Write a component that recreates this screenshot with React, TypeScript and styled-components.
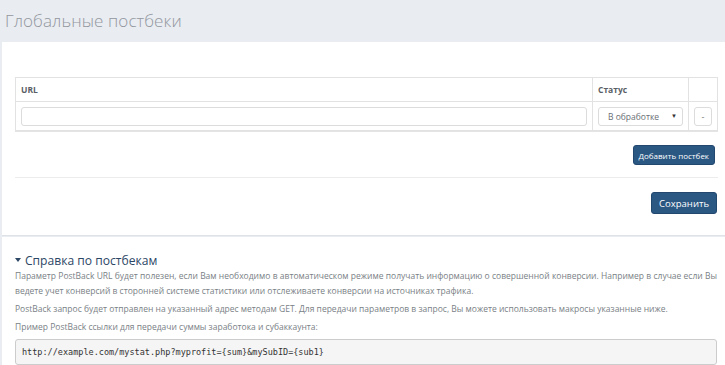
import styled, { createGlobalStyle } from "styled-components";

const GlobalStyle = createGlobalStyle`
  html, body {
    margin: 0;
    padding: 0;
    background: #e9ecf1;
    font-family: "Open Sans", "Liberation Sans", sans-serif;
  }
`;

function App() {
  return (
    <Page>
      <GlobalStyle />
      <Title>Глобальные постбеки</Title>

      <Panel>
        <Table>
          <thead>
            <tr>
              <Th>URL</Th>
              <Th $width={85}>Статус</Th>
              <Th $width={18}></Th>
            </tr>
          </thead>
          <tbody>
            <tr>
              <Td>
                <UrlInput type="text" />
              </Td>
              <Td>
                <Select>
                  <span>В обработке</span>
                  <Caret>▼</Caret>
                </Select>
              </Td>
              <Td>
                <RemoveButton>-</RemoveButton>
              </Td>
            </tr>
          </tbody>
        </Table>

        <ButtonRow>
          <PrimaryButton $small>Добавить постбек</PrimaryButton>
        </ButtonRow>
        <Divider />
        <ButtonRow>
          <PrimaryButton>Сохранить</PrimaryButton>
        </ButtonRow>
      </Panel>

      <HelpPanel>
        <HelpTitle>
          <svg viewBox="0 0 6 4" width="6" height="4">
            <path d="M0 0 L6 0 L3 4 Z" fill="#2c4765" />
          </svg>
          Справка по постбекам
        </HelpTitle>
        <Text>
          Параметр PostBack URL будет полезен, если Вам необходимо в автоматическом режиме получать
          информацию о совершенной конверсии. Например в случае если Вы ведете учет конверсий в
          сторонней системе статистики или отслеживаете конверсии на источниках трафика.
        </Text>
        <Text>
          PostBack запрос будет отправлен на указанный адрес методам GET. Для передачи параметров в
          запрос, Вы можете использовать макросы указанные ниже.
        </Text>
        <Text>Пример PostBack ссылки для передачи суммы заработока и субаккаунта:</Text>
        <Code>http://example.com/mystat.php?myprofit={"{sum}"}&amp;mySubID={"{sub1}"}</Code>
      </HelpPanel>
    </Page>
  );
}

const Page = styled.div`
  display: flex;
  flex-direction: column;
  height: 365px;
  overflow: hidden;
`;

const Title = styled.h1`
  margin: 0;
  padding: 0 5px;
  height: 42px;
  line-height: 41px;
  font-size: 17px;
  font-weight: 300;
  color: #92979e;
  letter-spacing: 0.1px;
`;

const Panel = styled.section`
  margin-left: 2px;
  background: #ffffff;
  border-bottom: 1px solid #dfe2e6;
  padding: 35px 7px 21px 13px;
  display: flex;
  flex-direction: column;
`;

const Table = styled.table`
  width: 100%;
  border-collapse: collapse;
  border: 1px solid #dddddd;
  box-shadow: 0 1px 0 #e4e4e4;
`;

const Th = styled.th<{ $width?: number }>`
  width: ${({ $width }) => ($width ? `${$width}px` : "auto")};
  height: 23px;
  padding: 0 5px;
  text-align: left;
  font-size: 8.5px;
  font-weight: 700;
  color: #5a5f66;
  border: 1px solid #e2e2e2;
`;

const Td = styled.td`
  padding: 4px 5px;
  height: 20px;
  border: 1px solid #e2e2e2;
  border-top: none;
`;

const UrlInput = styled.input`
  display: block;
  width: 100%;
  box-sizing: border-box;
  height: 19px;
  border: 1px solid #dcdcdc;
  border-radius: 3px;
  background: #fff;
`;

const Select = styled.div`
  display: flex;
  align-items: center;
  justify-content: space-between;
  height: 19px;
  box-sizing: border-box;
  border: 1px solid #dcdcdc;
  border-radius: 3px;
  padding: 0 5px 0 9px;
  font-size: 8.5px;
  color: #6a6f75;
`;

const Caret = styled.span`
  font-size: 6px;
  color: #333;
`;

const RemoveButton = styled.div`
  display: flex;
  align-items: center;
  justify-content: center;
  width: 18px;
  height: 19px;
  box-sizing: border-box;
  border: 1px solid #dcdcdc;
  border-radius: 3px;
  font-size: 9px;
  color: #777;
`;

const ButtonRow = styled.div`
  display: flex;
  justify-content: flex-end;
  padding-top: 14px;
`;

const PrimaryButton = styled.button<{ $small?: boolean }>`
  font-family: "Open Sans", "Liberation Sans", sans-serif;
  background: #2b5783;
  color: #ffffff;
  border: 1px solid #224870;
  border-radius: 3px;
  cursor: pointer;
  font-size: ${({ $small }) => ($small ? "8px" : "9.5px")};
  height: ${({ $small }) => ($small ? "20px" : "22px")};
  padding: ${({ $small }) => ($small ? "0 5px" : "0 7px")};
  margin-right: ${({ $small }) => ($small ? "3px" : "1px")};
`;

const Divider = styled.hr`
  margin: 12px 0 0;
  border: none;
  border-top: 1px solid #ececec;
`;

const HelpPanel = styled.section`
  margin: 1px 0 0 2px;
  background: #ffffff;
  padding: 15px 8px 0 13px;
  flex: 1;
`;

const HelpTitle = styled.h2`
  display: flex;
  align-items: center;
  gap: 4px;
  margin: 0;
  height: 16px;
  font-size: 12.1px;
  font-weight: 400;
  color: #2c4765;
`;

const Text = styled.p`
  margin: 0 0 3px;
  font-size: 8.5px;
  line-height: 15px;
  text-align: justify;
  color: #7a7f86;
`;

const Code = styled.pre`
  margin: 5px 0 0;
  padding: 0 6px;
  height: 24px;
  line-height: 24px;
  font-family: "DejaVu Sans Mono", "Liberation Mono", monospace;
  font-size: 8.5px;
  color: #333;
  background: #f5f5f5;
  border: 1px solid #cccccc;
  border-radius: 3px;
`;

export default App;
